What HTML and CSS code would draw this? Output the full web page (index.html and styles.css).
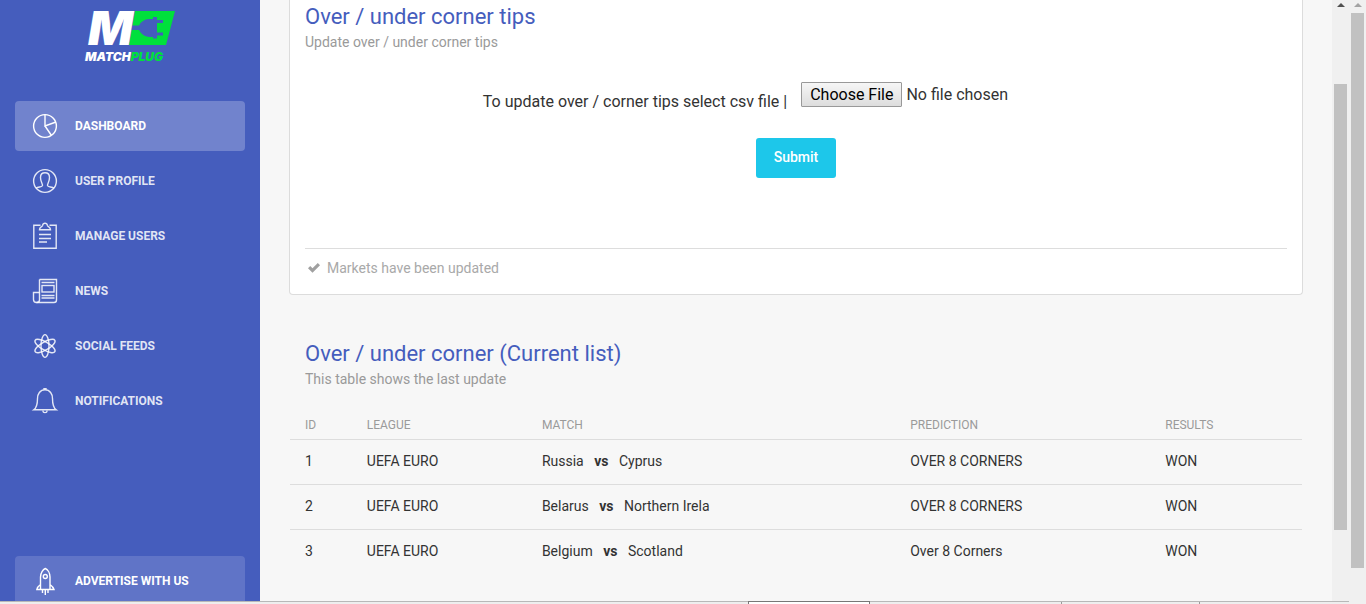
FILE: index.html
```html
<!DOCTYPE html>
<html lang="en">
  <head>
    <meta charset="UTF-8" />
    <meta name="viewport" content="width=device-width, initial-scale=1.0" />
    <link rel="stylesheet" href="styles.css">
    <title>Matchplug</title>
  </head>
  <body>
    <div class="window">
      <div class="wrapper">
        <aside class="sidebar">
          <a class="logo" href="#">
            <svg class="logo-mark" width="90" height="36" viewBox="0 0 90 36">
              <path fill="#00e03c" d="M50 1H90L81 35H44Z" />
              <path fill="#455dbd" d="M45 15.500H54Q57 9.500 64 9H68V7H72V10H78V13H72V22.500H78V25.500H72V28.500H68V27H64Q57 26 54 20H45Z" />
              <text class="logo-letter" x="3" y="35">M</text>
            </svg>
            <span class="logo-text">MATCH<span class="green">PLUG</span></span>
          </a>

          <nav class="menu">
            <a class="item active" href="#">
              <svg class="icon" viewBox="0 0 30 30">
                <circle cx="15" cy="15" r="11.400" />
                <path d="M15 3.500V15L26 11M15 15L21.500 24.500" />
              </svg>
              Dashboard
            </a>
            <a class="item" href="#">
              <svg class="icon" viewBox="0 0 30 30">
                <circle cx="15" cy="15" r="11.400" />
                <path d="M6 22.300C8 20.500 12.300 21.500 12.500 19.500C12.700 17.500 10.500 16 10.500 11.500C10.500 8.500 12 6.800 15 6.800S19.500 8.500 19.500 11.500C19.500 16 17.300 17.500 17.500 19.500C17.700 21.500 22 20.500 24 22.300" />
              </svg>
              User Profile
            </a>
            <a class="item" href="#">
              <svg class="icon" viewBox="0 0 30 30">
                <path d="M10.500 4.200H3.800V27.300H26.200V4.200H19.500" />
                <path d="M9.500 8.700C9.500 5.500 12.300 6.500 12.700 4.200C13 1.500 17 1.500 17.300 4.200C17.700 6.500 20.500 5.500 20.500 8.700Z" />
                <path d="M9 13.500H21M9 17.500H21M9 21H17" />
              </svg>
              Manage Users
            </a>
            <a class="item" href="#">
              <svg class="icon" viewBox="0 0 30 30">
                <path d="M9.500 3.500H26.500V24C26.500 25.700 25.700 26.500 24 26.500H6.500C4.500 26.500 3.500 25.500 3.500 23.500V16.500H9.500" />
                <path d="M9.500 3.500V24C9.500 25.500 8.500 26.500 6.500 26.500M11.500 6.500H24.500M11.500 19.500H24.500M11.500 22H24.500" />
                <rect x="12" y="9.500" width="12" height="6.500" />
              </svg>
              News
            </a>
            <a class="item" href="#">
              <svg class="icon" viewBox="0 0 30 30">
                <ellipse cx="15" cy="15" rx="4" ry="11.400" />
                <ellipse cx="15" cy="15" rx="4" ry="11.400" transform="rotate(60 15 15)" />
                <ellipse cx="15" cy="15" rx="4" ry="11.400" transform="rotate(120 15 15)" />
              </svg>
              Social Feeds
            </a>
            <a class="item" href="#">
              <svg class="icon" viewBox="0 0 30 30">
                <path d="M15 3.800C10 3.800 7.500 8 7.500 12.500C7.500 18.500 7 21.500 3.800 23.800H26.200C23 21.500 22.500 18.500 22.500 12.500C22.500 8 20 3.800 15 3.800Z" />
                <path d="M14 3.500V2.800H16V3.500M13 24.500V25.300C13 27 17 27 17 25.300V24.500" />
              </svg>
              Notifications
            </a>
            <a class="item advertise" href="#">
              <svg class="icon" viewBox="0 0 30 30">
                <path d="M10.500 23.500V11C10.500 7 13 3.500 15.300 2.500C17.700 3.500 20 7 20 11V23.500M10.500 18.500C8.500 20 7 21.500 6.800 23.500H24C23.500 21.500 22 20 20 18.500" />
                <circle cx="15.300" cy="10.500" r="2" />
                <path d="M12.500 24V27M15.300 24V29M18 24V27" />
              </svg>
              Advertise with us
            </a>
          </nav>
        </aside>

        <main class="content">
          <section class="card">
            <h4 class="title">Over / under corner tips</h4>
            <p class="category">Update over / under corner tips</p>
            <form class="upload">
              <div class="upload-row">
                <label for="csv">To update over / corner tips select csv file |</label>
                <input type="file" id="csv" />
              </div>
              <button class="btn" type="submit">Submit</button>
            </form>
            <div class="stats">
              <svg class="check" width="14" height="12" viewBox="0 0 14 12">
                <path d="M1 6.200L3.200 4L5.500 6.300L10.800 1L13 3.200L5.500 10.700Z" />
              </svg>
              Markets have been updated
            </div>
          </section>

          <section class="card plain">
            <h4 class="title">Over / under corner (Current list)</h4>
            <p class="category">This table shows the last update</p>
            <table class="table">
              <thead>
                <tr>
                  <th class="col-id">ID</th>
                  <th class="col-league">League</th>
                  <th class="col-match">Match</th>
                  <th class="col-prediction">Prediction</th>
                  <th>Results</th>
                </tr>
              </thead>
              <tbody>
                <tr>
                  <td>1</td>
                  <td>UEFA EURO</td>
                  <td>Russia <b>vs</b> Cyprus</td>
                  <td>OVER 8 CORNERS</td>
                  <td>WON</td>
                </tr>
                <tr>
                  <td>2</td>
                  <td>UEFA EURO</td>
                  <td>Belarus <b>vs</b> Northern Irela</td>
                  <td>OVER 8 CORNERS</td>
                  <td>WON</td>
                </tr>
                <tr>
                  <td>3</td>
                  <td>UEFA EURO</td>
                  <td>Belgium <b>vs</b> Scotland</td>
                  <td>Over 8 Corners</td>
                  <td>WON</td>
                </tr>
              </tbody>
            </table>
          </section>
        </main>

        <div class="scrollbar inner">
          <span class="arrow"></span>
          <span class="thumb"></span>
        </div>
      </div>

      <div class="tabs">
        <span class="tab current"></span>
        <span class="tab"></span>
        <span class="tab small"></span>
      </div>
    </div>

    <div class="scrollbar outer">
      <span class="arrow"></span>
      <span class="thumb"></span>
    </div>
  </body>
</html>
```

FILE: styles.css
```css
* {
  box-sizing: border-box;
}

body {
  display: flex;
  height: 100vh;
  margin: 0;
  overflow: hidden;
  background: #f7f7f7;
  color: #333333;
  font-family: Roboto, "Liberation Sans", sans-serif;
  font-size: 14px;
  line-height: 20px;
}

.window {
  flex: 1;
  display: flex;
  flex-direction: column;
  min-width: 0;
}

.wrapper {
  flex: 1;
  display: flex;
  min-height: 0;
  overflow: hidden;
}

/* sidebar */
.sidebar {
  flex: none;
  display: flex;
  flex-direction: column;
  width: 260px;
  background: #455dbd;
}

.logo {
  display: flex;
  flex-direction: column;
  align-items: flex-start;
  gap: 1px;
  height: 96px;
  padding: 10px 0 0 85px;
  color: #ffffff;
  text-decoration: none;
}

.logo-mark {
  flex: none;
  overflow: visible;
}

.logo-letter {
  fill: #ffffff;
  font-family: Inter, sans-serif;
  font-size: 47px;
  font-style: italic;
  font-weight: 900;
}

.logo-text {
  font-family: Inter, sans-serif;
  font-size: 12px;
  font-style: italic;
  font-weight: 900;
}

.green {
  color: #00e03c;
}

.menu {
  flex: 1;
  display: flex;
  flex-direction: column;
  gap: 5px;
  padding: 5px 15px 0;
}

.item {
  flex: none;
  display: flex;
  align-items: center;
  gap: 15px;
  height: 50px;
  padding: 0 15px;
  border-radius: 4px;
  color: rgba(255, 255, 255, 0.85);
  font-size: 12px;
  font-weight: 700;
  text-decoration: none;
  text-transform: uppercase;
}

.active {
  background: #7183cd;
  color: #ffffff;
}

.advertise {
  margin-top: auto;
  margin-bottom: -5px;
  background: #6074c7;
  color: #ffffff;
}

.icon {
  width: 30px;
  height: 30px;
  fill: none;
  stroke: currentColor;
  stroke-width: 1.4;
}

/* content */
.content {
  flex: 1;
  min-width: 0;
  padding: 0 29px;
}

.card {
  padding: 0 15px 16px;
  border: 1px solid #dcdcdc;
  border-top: 0;
  border-radius: 0 0 4px 4px;
  background: #ffffff;
}

.title {
  margin: 0;
  padding-top: 2px;
  color: #455dbd;
  font-size: 22px;
  font-weight: 400;
  line-height: 30px;
}

.category {
  margin: 0;
  color: #9a9a9a;
}

.upload {
  display: flex;
  flex-direction: column;
  align-items: center;
  gap: 26px;
  padding: 30px 0 70px;
  font-size: 16px;
}

.upload-row {
  display: flex;
  gap: 14px;
}

.upload-row label {
  padding-top: 10px;
}

.upload-row input {
  width: 308px;
  font: inherit;
}

.upload-row input::file-selector-button {
  height: 25px;
  margin: 0 4px 0 0;
  padding: 0 8px;
  border: 1px solid #999999;
  border-radius: 1px;
  background: linear-gradient(#f6f6f6, #dddddd);
  color: #000000;
  font: inherit;
}

.btn {
  width: 80px;
  height: 40px;
  padding: 0 0 2px;
  border: 0;
  border-radius: 3px;
  background: #1dc7ea;
  color: #ffffff;
  font: inherit;
  font-size: 14px;
  font-weight: 500;
}

.stats {
  display: flex;
  align-items: center;
  gap: 6px;
  padding: 9px 2px 0;
  border-top: 1px solid #dddddd;
  color: #a9a9a9;
}

.check {
  fill: #a0a0a0;
}

.plain {
  margin-top: 42px;
  padding: 0;
  border-color: transparent;
  background: transparent;
}

.plain .title,
.plain .category {
  padding-left: 15px;
}

/* table */
.table {
  width: 100%;
  margin-top: 20px;
  border-collapse: collapse;
  table-layout: fixed;
}

.table th {
  padding: 6px 8px 4px;
  color: #9a9a9a;
  font-size: 12px;
  font-weight: 400;
  text-align: left;
  text-transform: uppercase;
}

.table td {
  padding: 11px 8px 13px;
  border-top: 1px solid #dddddd;
}

.table th:first-child,
.table td:first-child {
  padding-left: 15px;
}

.table b {
  margin: 0 7px;
}

.col-id {
  width: 6.8%;
}

.col-league {
  width: 17.3%;
}

.col-match {
  width: 36.4%;
}

.col-prediction {
  width: 25.2%;
}

/* scrollbars */
.scrollbar {
  flex: none;
  display: flex;
  flex-direction: column;
  align-items: center;
  width: 17px;
  padding-top: 3px;
  background: #f0f0f0;
}

.arrow {
  border: 4px solid transparent;
  border-top: 0;
  border-bottom-color: #505050;
}

.thumb {
  width: 13px;
  background: #c1c1c1;
}

.inner .thumb {
  height: 74.5%;
  margin-top: 77px;
}

.outer .arrow {
  border-bottom-color: #a3a3a3;
}

.outer .thumb {
  height: 92.3%;
  margin-top: 6px;
}

/* bottom strip */
.tabs {
  flex: none;
  display: flex;
  height: 3px;
  padding-left: 748px;
  border-top: 1px solid #b8b8b8;
  background: #eeeeee;
}

.tab {
  width: 192px;
  border-right: 1px solid #999999;
}

.small {
  width: 138px;
}

.current {
  width: 122px;
  margin-top: -1px;
  border: 1px solid #777777;
  border-bottom: 0;
  background: #ffffff;
}
```
